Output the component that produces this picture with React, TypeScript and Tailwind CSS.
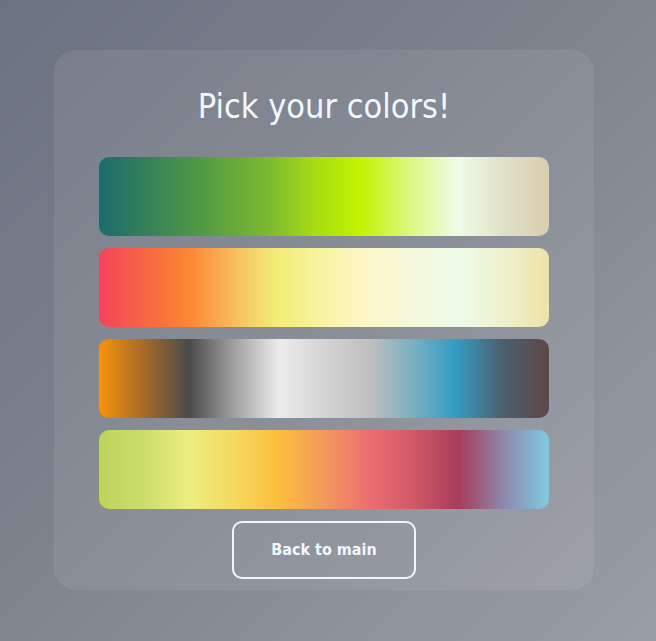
import React from "react";

const bars = [
  "linear-gradient(90deg,#1d6b6c 0%,#4a9448 20%,#7cba30 38%,#a8dc14 48%,#c2f300 58%,#dcf98a 70%,#eefce9 80%,#e0e0c8 90%,#d9cdae 100%)",
  "linear-gradient(90deg,#f3435a 0%,#f86c40 12%,#fd8634 20%,#f6c862 32%,#f2ef78 40%,#f8f4a4 50%,#fef5c6 58%,#f4f8dc 70%,#ecfce9 80%,#efeec8 92%,#eee2a6 100%)",
  "linear-gradient(90deg,#f8930a 0%,#a66a28 10%,#4a4a4a 20%,#a0a0a0 30%,#ececec 40%,#d4d4d4 50%,#c0c0c0 60%,#78afc2 70%,#339dc4 79%,#4c5f6c 90%,#5d4748 100%)",
  "linear-gradient(90deg,#bdd35a 0%,#ccdc6c 10%,#ecee80 20%,#f7d458 32%,#fcbe3e 40%,#f39a5c 50%,#ec6e70 60%,#d05866 70%,#a83c5c 80%,#8d88ac 90%,#7ecbe1 100%)",
];

export default function App() {
  return (
    <div
      className="w-[656px] h-[641px] flex pl-[54px] pt-[50px] bg-[linear-gradient(135deg,#6b7280_0%,#80858f_50%,#9a9ea6_100%)]"
      style={{ fontFamily: '"DejaVu Sans Condensed", "Liberation Sans", sans-serif' }}
    >
      <div className="w-[540px] h-[540px] rounded-[22px] bg-white/[0.07] flex flex-col items-center pt-[37px]">
        <h1 className="text-[34px] leading-[39px] text-[#f0f8ff] h-[70px]">Pick your colors!</h1>
        <div className="flex flex-col gap-[12px]">
          {bars.map((b, i) => (
            <div key={i} className="w-[450px] h-[79px] rounded-[10px]" style={{ background: b }} />
          ))}
        </div>
        <button className="mt-[12px] w-[184px] h-[58px] rounded-[10px] border-2 border-[#f0f8ff] text-[#f0f8ff] text-[16px] font-bold">
          Back to main
        </button>
      </div>
    </div>
  );
}
